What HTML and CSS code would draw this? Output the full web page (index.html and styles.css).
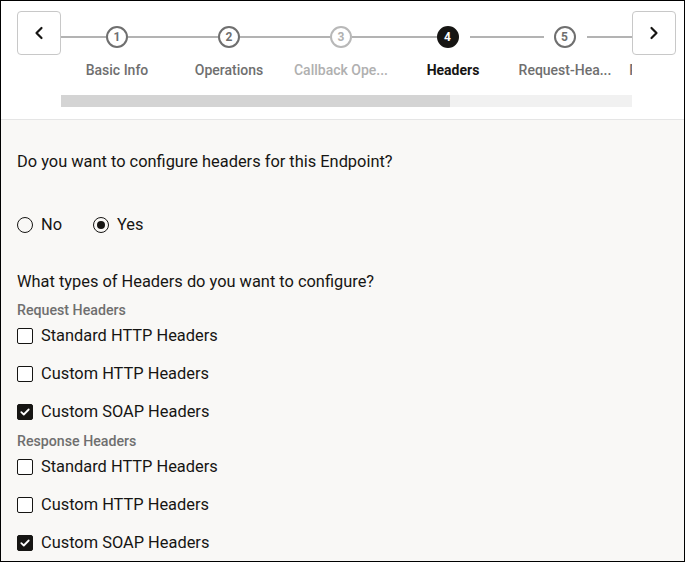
FILE: index.html
```html
<!DOCTYPE html>
<html>
<head>
<meta charset="utf-8">
<link rel="stylesheet" href="styles.css">
</head>
<body>
<div class="frame">
  <div class="header">
    <button class="nav-btn" aria-label="Previous">
      <svg width="12" height="14" viewBox="0 0 12 14"><path d="M8.5 2 L3.5 7 L8.5 12" fill="none" stroke="#161513" stroke-width="2.2" stroke-linecap="round" stroke-linejoin="round"/></svg>
    </button>
    <div class="train">
      <div class="steps">
        <div class="step done">
          <div class="track"><span class="line"></span><span class="circle">1</span><span class="line"></span></div>
          <div class="label">Basic Info</div>
        </div>
        <div class="step done">
          <div class="track"><span class="line"></span><span class="circle">2</span><span class="line"></span></div>
          <div class="label">Operations</div>
        </div>
        <div class="step disabled">
          <div class="track"><span class="line"></span><span class="circle">3</span><span class="line"></span></div>
          <div class="label">Callback Ope...</div>
        </div>
        <div class="step current">
          <div class="track"><span class="line"></span><span class="circle">4</span><span class="line gap-l"></span></div>
          <div class="label">Headers</div>
        </div>
        <div class="step done">
          <div class="track"><span class="line gap-r"></span><span class="circle">5</span><span class="line gap-l"></span></div>
          <div class="label">Request-Hea...</div>
        </div>
        <div class="step done">
          <div class="track"><span class="line"></span><span class="circle">6</span><span class="line"></span></div>
          <div class="label">Response-He...</div>
        </div>
      </div>
      <div class="progress"><div class="progress-fill" style="width: 389px"></div></div>
    </div>
    <button class="nav-btn" aria-label="Next">
      <svg width="12" height="14" viewBox="0 0 12 14"><path d="M3.5 2 L8.5 7 L3.5 12" fill="none" stroke="#161513" stroke-width="2.2" stroke-linecap="round" stroke-linejoin="round"/></svg>
    </button>
  </div>
  <div class="content">
    <p class="question">Do you want to configure headers for this Endpoint?</p>
    <div class="radios">
      <label class="radio"><span class="radio-dot"></span>No</label>
      <label class="radio"><span class="radio-dot checked"></span>Yes</label>
    </div>
    <p class="question q2">What types of Headers do you want to configure?</p>
    <div class="group-title">Request Headers</div>
    <label class="check"><span class="box"></span>Standard HTTP Headers</label>
    <label class="check"><span class="box"></span>Custom HTTP Headers</label>
    <label class="check"><span class="box checked"><svg width="10" height="8" viewBox="0 0 10 8"><path d="M1.3 4.2 L3.8 6.5 L8.7 1.5" fill="none" stroke="#fff" stroke-width="1.8" stroke-linecap="round" stroke-linejoin="round"/></svg></span>Custom SOAP Headers</label>
    <div class="group-title g2">Response Headers</div>
    <label class="check"><span class="box"></span>Standard HTTP Headers</label>
    <label class="check"><span class="box"></span>Custom HTTP Headers</label>
    <label class="check"><span class="box checked"><svg width="10" height="8" viewBox="0 0 10 8"><path d="M1.3 4.2 L3.8 6.5 L8.7 1.5" fill="none" stroke="#fff" stroke-width="1.8" stroke-linecap="round" stroke-linejoin="round"/></svg></span>Custom SOAP Headers</label>
  </div>
</div>
</body>
</html>
```

FILE: styles.css
```css
* { box-sizing: border-box; }
html, body { margin: 0; padding: 0; }
body {
  font-family: Roboto, "Noto Sans", "Liberation Sans", sans-serif;
  color: #161513;
}
.frame {
  width: 685px;
  height: 562px;
  border: 1px solid #000;
  background: #f9f8f6;
  overflow: hidden;
}
.header {
  background: #fff;
  border-bottom: 1px solid #e5e5e5;
  height: 119px;
  display: flex;
  align-items: flex-start;
  padding: 10px 8px 0 16px;
}
.nav-btn {
  width: 44px;
  height: 44px;
  flex-shrink: 0;
  border: 1px solid #c8c8c8;
  border-radius: 4px;
  background: #fff;
  display: flex;
  align-items: center;
  justify-content: center;
  padding: 0;
}
.train {
  width: 571px;
  flex-shrink: 0;
  overflow: hidden;
}
.steps {
  display: flex;
  padding-top: 15px;
}
.step {
  width: 112px;
  flex-shrink: 0;
  display: flex;
  flex-direction: column;
  align-items: center;
}
.track {
  width: 100%;
  height: 22px;
  display: flex;
  align-items: center;
}
.line {
  flex: 1;
  height: 2px;
  background: #b3b3b3;
}
.line.gap-l { margin-left: 11px; }
.line.gap-r { margin-right: 10px; }
.circle {
  width: 22px;
  height: 22px;
  border-radius: 50%;
  border: 2px solid #6f6f6f;
  background: #fff;
  display: flex;
  align-items: center;
  justify-content: center;
  font-size: 12px;
  font-weight: 700;
  color: #6f6f6f;
  flex-shrink: 0;
}
.label {
  margin-top: 12px;
  font-size: 14px;
  line-height: 20px;
  font-weight: 500;
  color: #6f6f6f;
  white-space: nowrap;
}
.step.disabled .circle { border-color: #b8b8b8; color: #b0b0b0; }
.step.disabled .label { color: #b0b0b0; }
.step.current .circle { background: #161513; border-color: #161513; color: #fff; }
.step.current .label { color: #161513; font-weight: 700; }
.progress {
  margin-top: 15px;
  height: 12px;
  background: #f1f1f1;
}
.progress-fill {
  height: 100%;
  background: #d4d4d4;
}
.content {
  padding: 30px 16px 0 16px;
}
.question {
  margin: 0;
  font-size: 16.4px;
  line-height: 24px;
}
.q2 { margin-top: 33px; }
.radios {
  display: flex;
  gap: 31px;
  margin-top: 39px;
}
.radio, .check {
  display: flex;
  align-items: center;
  font-size: 16.4px;
  line-height: 24px;
  height: 24px;
}
.radio-dot {
  width: 16px;
  height: 16px;
  border: 1px solid #161513;
  border-radius: 50%;
  margin-right: 8px;
  display: flex;
  align-items: center;
  justify-content: center;
}
.radio-dot.checked::after {
  content: "";
  width: 8px;
  height: 8px;
  border-radius: 50%;
  background: #161513;
}
.group-title {
  margin-top: 6px;
  font-size: 14.2px;
  line-height: 20px;
  font-weight: 500;
  color: #6f6f6f;
}
.g2 { margin-top: 7px; }
.check { margin-top: 14px; }
.group-title + .check { margin-top: 4px; }
.box {
  width: 16px;
  height: 16px;
  border: 1px solid #161513;
  border-radius: 2px;
  margin-right: 8px;
  display: flex;
  align-items: center;
  justify-content: center;
  background: #fff;
}
.box.checked { background: #161513; }
```
